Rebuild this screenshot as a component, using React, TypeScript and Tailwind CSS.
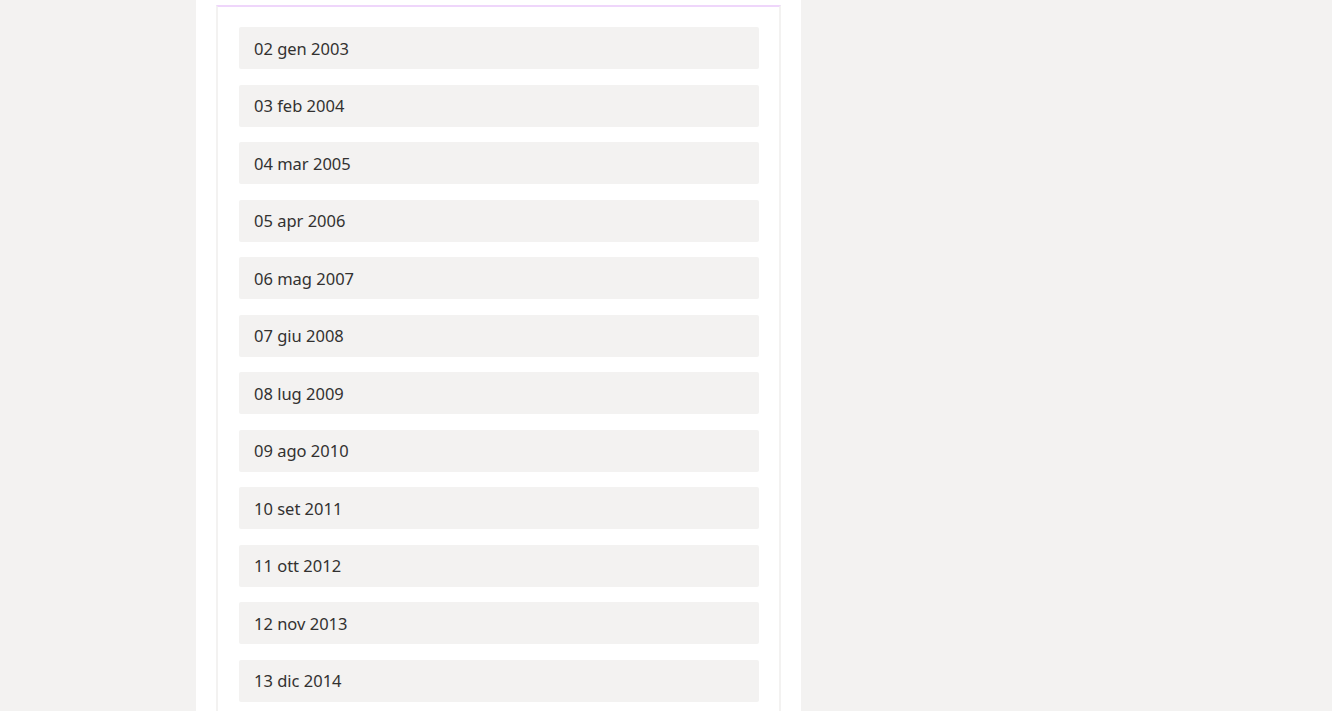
export default function App() {
  const items = [
    "02 gen 2003",
    "03 feb 2004",
    "04 mar 2005",
    "05 apr 2006",
    "06 mag 2007",
    "07 giu 2008",
    "08 lug 2009",
    "09 ago 2010",
    "10 set 2011",
    "11 ott 2012",
    "12 nov 2013",
    "13 dic 2014",
  ];
  return (
    <div
      className="h-[711px] w-[1332px] overflow-hidden bg-[#f3f2f1]"
      style={{ fontFamily: '"Noto Sans", "Open Sans", sans-serif' }}
    >
      <div className="ml-[196px] h-full w-[605px] bg-white px-[20px] pt-[5px]">
        <div className="border-2 border-[#f3f2f1] border-t-[#efd6fb] pt-[20px] pl-[21px] pr-[20px] pb-[20px]">
          <div className="flex flex-col gap-[15.5px]">
            {items.map((t) => (
              <div
                key={t}
                className="flex h-[42px] w-[520px] items-center rounded-[2px] bg-[#f3f2f1] pl-[15px] pt-[2px] text-[16.5px] text-[#323130]"
              >
                {t}
              </div>
            ))}
          </div>
        </div>
      </div>
    </div>
  );
}
